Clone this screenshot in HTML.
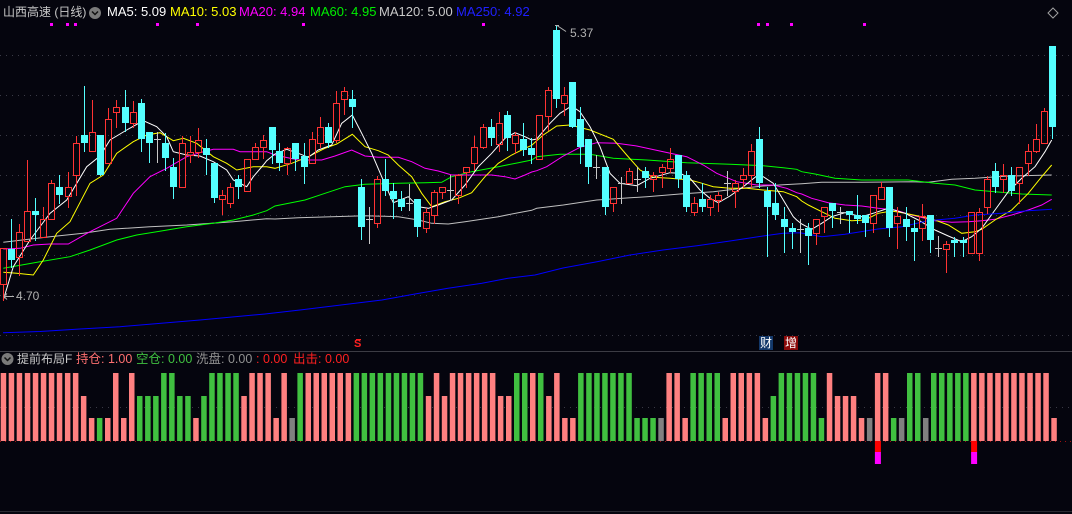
<!DOCTYPE html>
<html><head><meta charset="utf-8">
<style>
html,body{margin:0;padding:0;background:#05050e;}
body{width:1072px;height:514px;position:relative;overflow:hidden;font-family:"Liberation Sans","Noto Sans CJK SC",sans-serif;}
.t{position:absolute;font-size:13px;line-height:14px;white-space:nowrap;}
.c{font-size:12.5px;}
svg{position:absolute;left:0;top:0;}
</style></head><body>
<svg id="s" width="1072" height="514" xmlns="http://www.w3.org/2000/svg"></svg>
<div class="t" style="left:3px;top:5px;color:#c8c8c8;font-size:12px">山西高速 (日线)</div>
<div class="t" style="left:107px;top:5px;color:#ffffff">MA5: 5.09</div>
<div class="t" style="left:170px;top:5px;color:#ffff00">MA10: 5.03</div>
<div class="t" style="left:239px;top:5px;color:#ff00ff">MA20: 4.94</div>
<div class="t" style="left:310px;top:5px;color:#00ee00">MA60: 4.95</div>
<div class="t" style="left:379px;top:5px;color:#c8c8c8">MA120: 5.00</div>
<div class="t" style="left:456px;top:5px;color:#2020ff">MA250: 4.92</div>
<div class="t" style="left:570px;top:26px;color:#b0b0b0;font-size:12px">5.37</div>
<div class="t" style="left:16px;top:289px;color:#b0b0b0;font-size:12px">4.70</div>
<div class="t" style="left:17px;top:352px;color:#c8c8c8;font-size:12px">提前布局F</div>
<div class="t c" style="left:76px;top:352px;color:#ff7070">持仓: 1.00</div>
<div class="t c" style="left:136px;top:352px;color:#40c040">空仓: 0.00</div>
<div class="t c" style="left:196px;top:352px;color:#909090">洗盘: 0.00</div>
<div class="t c" style="left:256px;top:352px;color:#ff2020">: 0.00</div>
<div class="t c" style="left:293px;top:352px;color:#ff2020">出击: 0.00</div>
<div class="t" style="left:354px;top:337px;color:#ff2020;font-size:11px;font-weight:bold">S</div>
<div class="t" style="left:759px;top:336px;color:#ffffff;font-size:12px;background:#13386a;padding:0 1px">财</div>
<div class="t" style="left:784px;top:336px;color:#ffffff;font-size:12px;background:#8a0a0a;padding:0 1px">增</div>
<script>
var S=document.getElementById('s');var h='';
function L(x1,y1,x2,y2,c,extra){h+='<line x1="'+x1+'" y1="'+y1+'" x2="'+x2+'" y2="'+y2+'" stroke="'+c+'" '+(extra||'')+'/>';}
function R(x,y,w,hh,f,extra){h+='<rect x="'+x+'" y="'+y+'" width="'+w+'" height="'+hh+'" fill="'+f+'" '+(extra||'')+'/>';}
[55,95,135,175,215,255,295,335].forEach(function(y){L(0,y+.5,1072,y+.5,'#3a3a46','stroke-dasharray="1 5"');});
L(0,407.5,1072,407.5,'#3a3a46','stroke-dasharray="1 5"');
L(0,351.5,1072,351.5,'#3c3c44');
L(0,511.5,1072,511.5,'#2a2a32');
L(0,441.5,1072,441.5,'#a01010','stroke-dasharray="1 4"');
[51,67,75,157,197,303,483,758,767,791,864].forEach(function(x){R(x-1,23,3,3,'#ff00ff');});
function PM(segs,c){var all=[];segs.forEach(function(sg){sg[0].forEach(function(p){all.push([sg[1]+p[0]/3,sg[2]+p[1]/3]);});});h+='<polyline points="'+all.map(function(p){return p[0].toFixed(1)+','+p[1].toFixed(1)}).join(' ')+'" fill="none" stroke="'+c+'" stroke-width="1"/>';}
PM([[[[10,517],[150,500],[250,490],[330,478],[450,470],[560,465],[700,455],[800,446]],0,70],
[[[30,447],[100,443],[200,440],[300,437],[400,440],[460,450],[500,460],[550,462],[600,455],[700,440],[760,428],[800,421]],265,70],
[[[20,565],[100,555],[200,540],[350,530],[450,522],[550,515],[650,503],[700,498],[760,494],[800,492]],530,20],
[[[20,491],[80,487],[200,487],[350,485],[400,487],[470,478],[540,475],[640,468],[770,465]],795,20]],'#c0c0c0');
PM([[[[10,595],[120,575],[210,560],[270,540],[350,510],[410,495],[470,485],[560,470],[640,460],[700,450],[760,435],[800,422]],0,70],
[[[30,408],[120,390],[180,370],[240,350],[300,343],[400,340],[480,338],[530,337],[560,320],[620,305],[700,290],[760,278],[800,270]],265,70],
[[[20,410],[90,403],[180,403],[250,415],[350,420],[470,428],[600,433],[700,437],[760,443],[800,448]],530,20],
[[[20,455],[60,462],[120,475],[200,480],[340,480],[420,490],[480,495],[540,510],[600,515],[680,522],[770,525]],795,20]],'#00ff00');
PM([[[[10,537],[60,535],[100,525],[150,522],[205,522],[270,485],[350,445],[400,370],[450,320],[500,295],[560,260],[600,248],[640,238],[700,238],[720,245],[800,245]],0,70],
[[[30,255],[100,270],[170,270],[210,258],[260,240],[300,258],[340,262],[400,262],[440,275],[480,295],[520,303],[560,315],[620,315],[680,315],[720,320],[750,327],[780,315],[800,306]],265,70],
[[[20,452],[50,440],[100,408],[150,382],[200,368],[260,370],[320,378],[400,395],[470,410],[520,435],[560,460],[620,485],[680,495],[730,495],[770,505],[800,518]],530,20],
[[[20,522],[50,535],[100,548],[150,555],[200,558],[250,565],[300,570],[350,585],[420,602],[470,607],[520,605],[560,602],[600,598],[650,585],[700,570],[740,555],[770,538]],795,20]],'#ff00ff');
PM([[[[10,607],[50,610],[100,615],[130,570],[170,490],[210,455],[270,340],[310,315],[350,250],[400,215],[440,195],[480,188],[520,212],[550,205],[590,220],[640,260],[680,280],[710,300],[760,290],[800,290]],0,70],
[[[30,295],[80,280],[130,260],[180,235],[215,222],[262,193],[300,230],[340,242],[370,255],[400,285],[440,320],[470,370],[500,410],[540,395],[580,385],[620,368],[660,320],[700,280],[740,255],[780,235],[800,226]],265,70],
[[[20,362],[40,345],[80,318],[120,315],[180,330],[250,358],[290,405],[330,450],[370,472],[420,475],[480,480],[510,488],[550,500],[600,505],[650,505],[700,510],[760,515],[800,530]],530,20],
[[[20,543],[40,555],[80,575],[120,595],[170,602],[210,600],[250,580],[290,573],[330,580],[380,590],[420,600],[460,615],[500,640],[540,635],[560,628],[600,600],[650,570],[700,520],[740,470],[770,435]],795,20]],'#ffff00');
PM([[[[10,690],[40,590],[90,510],[150,430],[200,390],[260,290],[300,258],[330,210],[380,180],[430,152],[470,170],[500,200],[520,245],[560,255],[600,258],[640,275],[680,300],[700,330],[740,350],[760,320],[790,285],[800,272]],0,70],
[[[30,252],[65,238],[100,250],[130,262],[160,240],[200,225],[230,160],[262,135],[290,190],[320,250],[350,320],[385,398],[430,380],[460,410],[490,415],[520,405],[560,390],[600,345],[640,290],[680,250],[720,205],[750,188],[780,200],[800,210]],265,70],
[[[20,357],[60,310],[90,280],[125,258],[150,275],[180,320],[210,380],[240,460],[270,490],[320,497],[360,475],[420,458],[450,460],[480,475],[510,510],[540,535],[565,548],[600,528],[640,500],[680,468],[700,470],[730,490],[760,540],[790,590],[800,600]],530,20],
[[[20,612],[50,628],[80,610],[110,590],[150,578],[200,590],[240,578],[280,565],[330,580],[370,600],[420,630],[460,648],[500,665],[530,650],[560,625],[600,570],[640,515],[680,475],[720,440],[750,395],[770,360]],795,20]],'#ffffff');
h+='<polyline points="3,332.7 40,331.5 80,329 120,326.7 200,320 265,314 300,310 382,300 415,294 448,288.3 482,283.3 508,278.3 535,275 563,268 597,261.7 630,255 663,250 697,245.7 730,241 763,236 783,233.3 800,232.7 822,236.7 845,234.3 878,229 902,226.7 928,220.7 955,218.3 975,215 1002,213.3 1028,210.7 1052,209.3" fill="none" stroke="#0000ff"/>';
var Z=[
[0,70,[[10,'r',535,643,535,690],[34,'c',538,570,447,590],[58,'r',487,560,462,615],[82,'r',423,512,270,512],[106,'c',423,435,385,510],[130,'r',447,500,410,500],[154,'r',340,448,330,448],[178,'c',350,375,315,398],[204,'r',352,377,305,410],[229,'r',220,315,197,375],[253,'c',195,218,47,243],[277,'r',185,243,90,243],[301,'c',195,315,195,315],[325,'r',148,280,113,280],[349,'r',112,125,90,170],[376,'c',112,158,60,182],[400,'r',125,160,92,170],[424,'c',100,207,88,243],[448,'c',185,218,185,275],[472,'g',208,208,185,275],[496,'c',218,265,190,300],[520,'c',290,350,265,385],[547,'r',220,352,198,352],[571,'r',245,255,198,275],[595,'r',210,245,175,260],[619,'c',233,255,207,313],[643,'c',280,385,280,397],[667,'r',375,388,360,433],[691,'r',352,400,340,410],[715,'c',327,350,315,385],[741,'r',268,363,268,363],[765,'r',232,268,220,268],[789,'r',210,232,195,265]]],
[265,70,[[20,'c',172,240,172,278],[43,'c',243,278,220,300],[67,'r',233,280,230,313],[91,'c',220,268,220,300],[117,'c',258,290,220,338],[142,'r',208,280,185,280],[166,'r',172,220,140,230],[190,'c',172,218,160,232],[214,'r',100,210,63,215],[238,'r',62,88,52,132],[262,'c',87,110,60,170],[289,'c',352,472,327,508],[313,'g',448,448,412,520],[337,'r',328,460,318,472],[361,'c',327,362,268,375],[385,'c',363,387,340,445],[409,'c',388,410,362,420],[433,'g',400,400,342,420],[457,'c',387,472,387,497],[484,'r',425,475,415,485],[508,'r',365,435,360,460],[532,'r',352,365,352,385],[556,'g',360,360,315,390],[580,'r',315,375,312,398],[604,'r',292,305,290,350],[628,'r',232,280,198,300],[655,'r',172,232,162,235],[679,'c',172,205,148,225],[703,'r',160,222,127,243],[727,'c',135,205,123,240],[751,'r',195,220,185,250],[775,'c',208,240,158,255],[799,'c',233,255,205,278]]],
[530,20,[[28,'r',285,418,285,418],[55,'r',210,287,200,330],[79,'c',30,237,15,260],[103,'r',225,250,200,285],[127,'c',185,320,185,320],[151,'c',297,380,262,428],[175,'c',357,440,357,488],[199,'g',440,440,405,475],[226,'c',440,560,440,583],[250,'r',502,550,502,572],[274,'g',488,488,470,548],[298,'r',453,490,443,490],[322,'g',478,478,440,512],[346,'c',453,475,440,500],[370,'r',465,478,455,512],[397,'r',442,455,433,500],[421,'r',418,443,385,455],[445,'c',405,478,405,500],[469,'c',465,560,452,572],[493,'r',550,575,530,585],[517,'c',538,560,490,572],[541,'r',538,562,525,585],[565,'r',525,540,515,572],[592,'g',490,490,453,525],[616,'r',490,512,480,560],[640,'r',465,478,443,500],[664,'r',393,465,372,500],[688,'c',357,488,322,500],[712,'c',513,560,500,708],[736,'c',550,585,490,597],[763,'c',597,622,560,695],[787,'c',623,635,608,685]]],
[795,20,[[15,'g',628,628,598,695],[40,'c',625,648,610,732],[64,'r',598,638,598,672],[88,'r',562,587,562,635],[112,'c',550,572,550,622],[136,'g',575,575,562,608],[163,'c',573,585,573,636],[187,'c',585,598,525,610],[211,'c',585,608,585,648],[235,'r',525,610,525,636],[259,'r',502,538,485,538],[283,'c',502,625,502,648],[307,'r',587,610,562,683],[334,'c',598,622,560,660],[358,'c',625,635,600,720],[382,'r',588,625,552,660],[406,'c',585,660,585,695],[430,'g',685,685,648,708],[454,'r',673,686,662,755],[478,'c',660,670,650,708],[505,'c',660,670,650,708],[529,'r',575,698,575,698],[553,'r',575,698,565,720],[577,'r',478,562,468,578],[601,'c',453,500,430,515],[625,'r',465,478,432,515],[649,'c',465,512,440,525],[673,'r',442,490,442,550],[700,'r',393,430,372,465],[724,'r',358,393,313,395],[748,'r',273,370,263,370],[772,'c',78,320,78,355]]]];
Z.forEach(function(z){var ox=z[0],oy=z[1];z[2].forEach(function(c){
 var x=Math.round(ox+c[0]/3),bt=Math.round(oy+c[2]/3),bb=Math.round(oy+c[3]/3),wt=Math.round(oy+c[4]/3),wb=Math.round(oy+c[5]/3);
 if(c[1]=='c'){R(x,wt,1,wb-wt+1,'#54ffff');R(x-3,bt,7,Math.max(1,bb-bt),'#54ffff');}
 else if(c[1]=='g'){R(x,wt,1,wb-wt+1,'#c8c8c8');R(x-3,bt,7,1,'#c8c8c8');}
 else{ if(bt>wt)R(x,wt,1,bt-wt,'#ff3333'); if(wb>bb)R(x,bb,1,wb-bb+1,'#ff3333');
  h+='<rect x="'+(x-2.5)+'" y="'+(bt+.5)+'" width="6" height="'+Math.max(1,bb-bt)+'" fill="none" stroke="#ff3333" stroke-width="1"/>';}
});});
L(557,25.5,566,31.5,'#b0b0b0');L(555,25.5,559,25.5,'#b0b0b0');
L(4,296.5,14,296.5,'#b0b0b0');L(4,296.5,7,293.5,'#b0b0b0');L(4,296.5,7,299.5,'#b0b0b0');
L(356,339.5,361,339.5,'#ff2020');
var seq="PPPPPPPPPPpqhqPqPgggGGggqgGGGGpPPPqPxGPPPPPPGGGGGGGGGpPpPPPPPPppGGPGpPqqGGGGGGGhhhxPPqGGGGqPPPPqgGGGGGhPpppqxPPhxGGxGGGGGPPPPPPPPPPq";
var col={P:'#ff8080',p:'#ff8080',q:'#ff8080',G:'#40c040',g:'#40c040',h:'#40c040',x:'#808080'};
var tops={P:373,p:396,q:418,G:373,g:396,h:418,x:418};
for(var i=0;i<seq.length;i++){var ch=seq[i];var x=0.7+8.02*i;R(x.toFixed(1),tops[ch],5.5,441-tops[ch],col[ch]);
 if(i==109||i==121){R(x.toFixed(1),441,6,11,'#ff0000');R(x.toFixed(1),452,6,12,'#ff00ff');}}
h+='<circle cx="95" cy="13" r="6" fill="#7a7a7a"/><polyline points="92,11.5 95,14.5 98,11.5" fill="none" stroke="#111" stroke-width="1.5"/>';
h+='<circle cx="7.5" cy="359" r="6" fill="#7a7a7a"/><polyline points="4.5,357.5 7.5,360.5 10.5,357.5" fill="none" stroke="#111" stroke-width="1.5"/>';
h+='<polygon points="1053,8 1058,13 1053,18 1048,13" fill="none" stroke="#a0a0a0"/>';
S.innerHTML=h;
</script>
</body></html>
